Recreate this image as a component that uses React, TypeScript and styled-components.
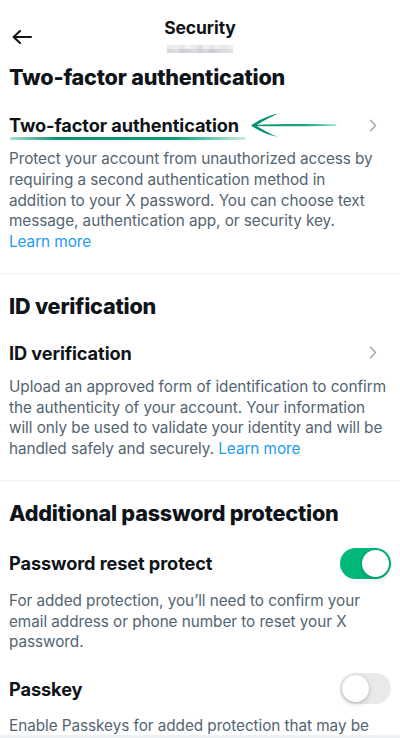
import styled, { createGlobalStyle } from "styled-components";

const GlobalStyle = createGlobalStyle`
  html, body {
    margin: 0;
    padding: 0;
    background: #ffffff;
  }
  body {
    font-family: Inter, "Noto Sans", "Liberation Sans", sans-serif;
    color: #0f1419;
    -webkit-font-smoothing: antialiased;
  }
`;

const Page = styled.div`
  width: 400px;
  background: #ffffff;
`;

// Header
const Header = styled.header`
  display: grid;
  grid-template-columns: 1fr auto 1fr;
  height: 53px;
  padding-top: 18px;
  box-sizing: border-box;
`;

const BackButton = styled.div`
  display: flex;
  align-items: flex-start;
  padding: 12px 0 0 12px;
  color: #0f1419;
`;

const HeaderCenter = styled.div`
  display: flex;
  flex-direction: column;
  align-items: center;
`;

const HeaderTitle = styled.div`
  font-size: 17.5px;
  line-height: 20px;
  font-weight: 700;
  letter-spacing: -0.1px;
`;

const Blurred = styled.div`
  display: grid;
  grid-template-columns: repeat(11, 6px);
  grid-template-rows: repeat(2, 4px);
  margin-top: 7px;
`;

const Pixel = styled.span<{ $shade: number }>`
  background: ${(p) => `rgb(${p.$shade}, ${p.$shade + 2}, ${p.$shade + 6})`};
`;

// Sections
const Section = styled.section<{ $top: number }>`
  padding: ${(p) => p.$top}px 9px 20px 9px;
  border-bottom: 1px solid #eff3f4;
`;

const SectionTitle = styled.h2`
  margin: 0;
  font-size: 21.6px;
  line-height: 28px;
  font-weight: 800;
  letter-spacing: -0.2px;
`;

const ItemRow = styled.div<{ $gap: number }>`
  display: flex;
  align-items: center;
  justify-content: space-between;
  margin-top: ${(p) => p.$gap}px;
  min-height: 24px;
`;

const ItemTitle = styled.span<{ $marked?: boolean }>`
  position: relative;
  font-size: 18.2px;
  line-height: 24px;
  font-weight: 700;
  letter-spacing: -0.1px;

  ${(p) =>
    p.$marked &&
    `
    &::after {
      content: "";
      position: absolute;
      left: 1px;
      right: -7px;
      bottom: -3px;
      height: 3px;
      border-radius: 2px;
      background: linear-gradient(
        90deg,
        rgba(18, 150, 118, 0.35) 0%,
        #0d8f73 20%,
        #0f9a7a 70%,
        rgba(40, 190, 150, 0.25) 100%
      );
    }
  `}
`;

const Pointer = styled.svg`
  position: absolute;
  left: calc(100% + 10px);
  top: -1px;
`;

const Chevron = styled.svg`
  margin-right: 14px;
  flex-shrink: 0;
`;

const Description = styled.p<{ $measure?: number }>`
  margin: 12px 0 0 0;
  max-width: ${(p) => (p.$measure ? `${p.$measure}px` : "none")};
  font-size: 15.3px;
  line-height: 20.75px;
  color: #536471;
  letter-spacing: -0.05px;
`;

const Link = styled.span`
  color: #1d9bf0;
`;

const Toggle = styled.div<{ $on: boolean }>`
  position: relative;
  width: 51px;
  height: 31px;
  border-radius: 16px;
  flex-shrink: 0;
  background: ${(p) => (p.$on ? "#00b87a" : "#e9e9eb")};

  &::after {
    content: "";
    position: absolute;
    top: 2px;
    left: ${(p) => (p.$on ? "22px" : "2px")};
    width: 27px;
    height: 27px;
    border-radius: 50%;
    background: #ffffff;
    box-shadow: 0 2px 5px rgba(0, 0, 0, 0.18), 0 0 0 0.5px rgba(0, 0, 0, 0.06);
  }
`;

const BottomBar = styled.div`
  position: fixed;
  left: 0;
  right: 0;
  bottom: 0;
  height: 3px;
  background: #eef1f4;
`;

const pixels = [
  232, 236, 226, 240, 232, 220, 238, 228, 236, 230, 238,
  214, 220, 206, 212, 218, 208, 214, 204, 212, 218, 222,
];

function ChevronIcon() {
  return (
    <Chevron width="8" height="13" viewBox="0 0 8 13">
      <path d="M1.5 1.2 L6.5 6.5 L1.5 11.8" fill="none" stroke="#99a6b2" strokeWidth="1.4" strokeLinecap="round" strokeLinejoin="round" />
    </Chevron>
  );
}

export default function App() {
  return (
    <Page>
      <GlobalStyle />
      <Header>
        <BackButton>
          <svg width="20" height="14" viewBox="0 0 20 14">
            <path d="M19 7 H2 M8 1 L1.6 7 L8 13" fill="none" stroke="#0f1419" strokeWidth="2" strokeLinecap="round" strokeLinejoin="round" />
          </svg>
        </BackButton>
        <HeaderCenter>
          <HeaderTitle>Security</HeaderTitle>
          <Blurred>
            {pixels.map((s, i) => (
              <Pixel key={i} $shade={s} />
            ))}
          </Blurred>
        </HeaderCenter>
        <div />
      </Header>

      <Section $top={10}>
        <SectionTitle>Two-factor authentication</SectionTitle>
        <ItemRow $gap={22}>
          <ItemTitle $marked>
            Two-factor authentication
            <Pointer width="90" height="26" viewBox="0 0 90 26">
              <defs>
                <linearGradient id="ptr" x1="0" y1="0" x2="1" y2="0">
                  <stop offset="0" stopColor="#0b8f72" />
                  <stop offset="0.6" stopColor="#15a882" />
                  <stop offset="1" stopColor="#3cc49a" stopOpacity="0.7" />
                </linearGradient>
              </defs>
              <path d="M3 13 C 30 11.8, 60 12, 87 12.5 L 87 13.7 C 60 14.2, 30 14.6, 3 14 Z" fill="url(#ptr)" />
              <path d="M2 13.4 C 10 8, 18 4, 29 1.5 C 21 5.5, 13 9.5, 7 13.4 Z" fill="#0b8f72" />
              <path d="M2 13.4 C 10 19, 18 22.5, 29 25 C 21 21.5, 13 17.5, 7 13.4 Z" fill="#0b8f72" />
            </Pointer>
          </ItemTitle>
          <ChevronIcon />
        </ItemRow>
        <Description $measure={367}>
          Protect your account from unauthorized access by requiring a second authentication method in addition to your X password. You can choose text message, authentication app, or security key.
          <br />
          <Link>Learn more</Link>
        </Description>
      </Section>

      <Section $top={18}>
        <SectionTitle>ID verification</SectionTitle>
        <ItemRow $gap={21}>
          <ItemTitle>ID verification</ItemTitle>
          <ChevronIcon />
        </ItemRow>
        <Description>
          Upload an approved form of identification to confirm the authenticity of your account. Your information will only be used to validate your identity and will be handled safely and securely. <Link>Learn more</Link>
        </Description>
      </Section>

      <Section $top={18}>
        <SectionTitle>Additional password protection</SectionTitle>
        <ItemRow $gap={21}>
          <ItemTitle>Password reset protect</ItemTitle>
          <Toggle $on />
        </ItemRow>
        <Description>
          For added protection, you’ll need to confirm your email address or phone number to reset your X password.
        </Description>
        <ItemRow $gap={20}>
          <ItemTitle>Passkey</ItemTitle>
          <Toggle $on={false} />
        </ItemRow>
        <Description>
          Enable Passkeys for added protection that may be used to log in to your X account.
        </Description>
      </Section>
      <BottomBar />
    </Page>
  );
}
